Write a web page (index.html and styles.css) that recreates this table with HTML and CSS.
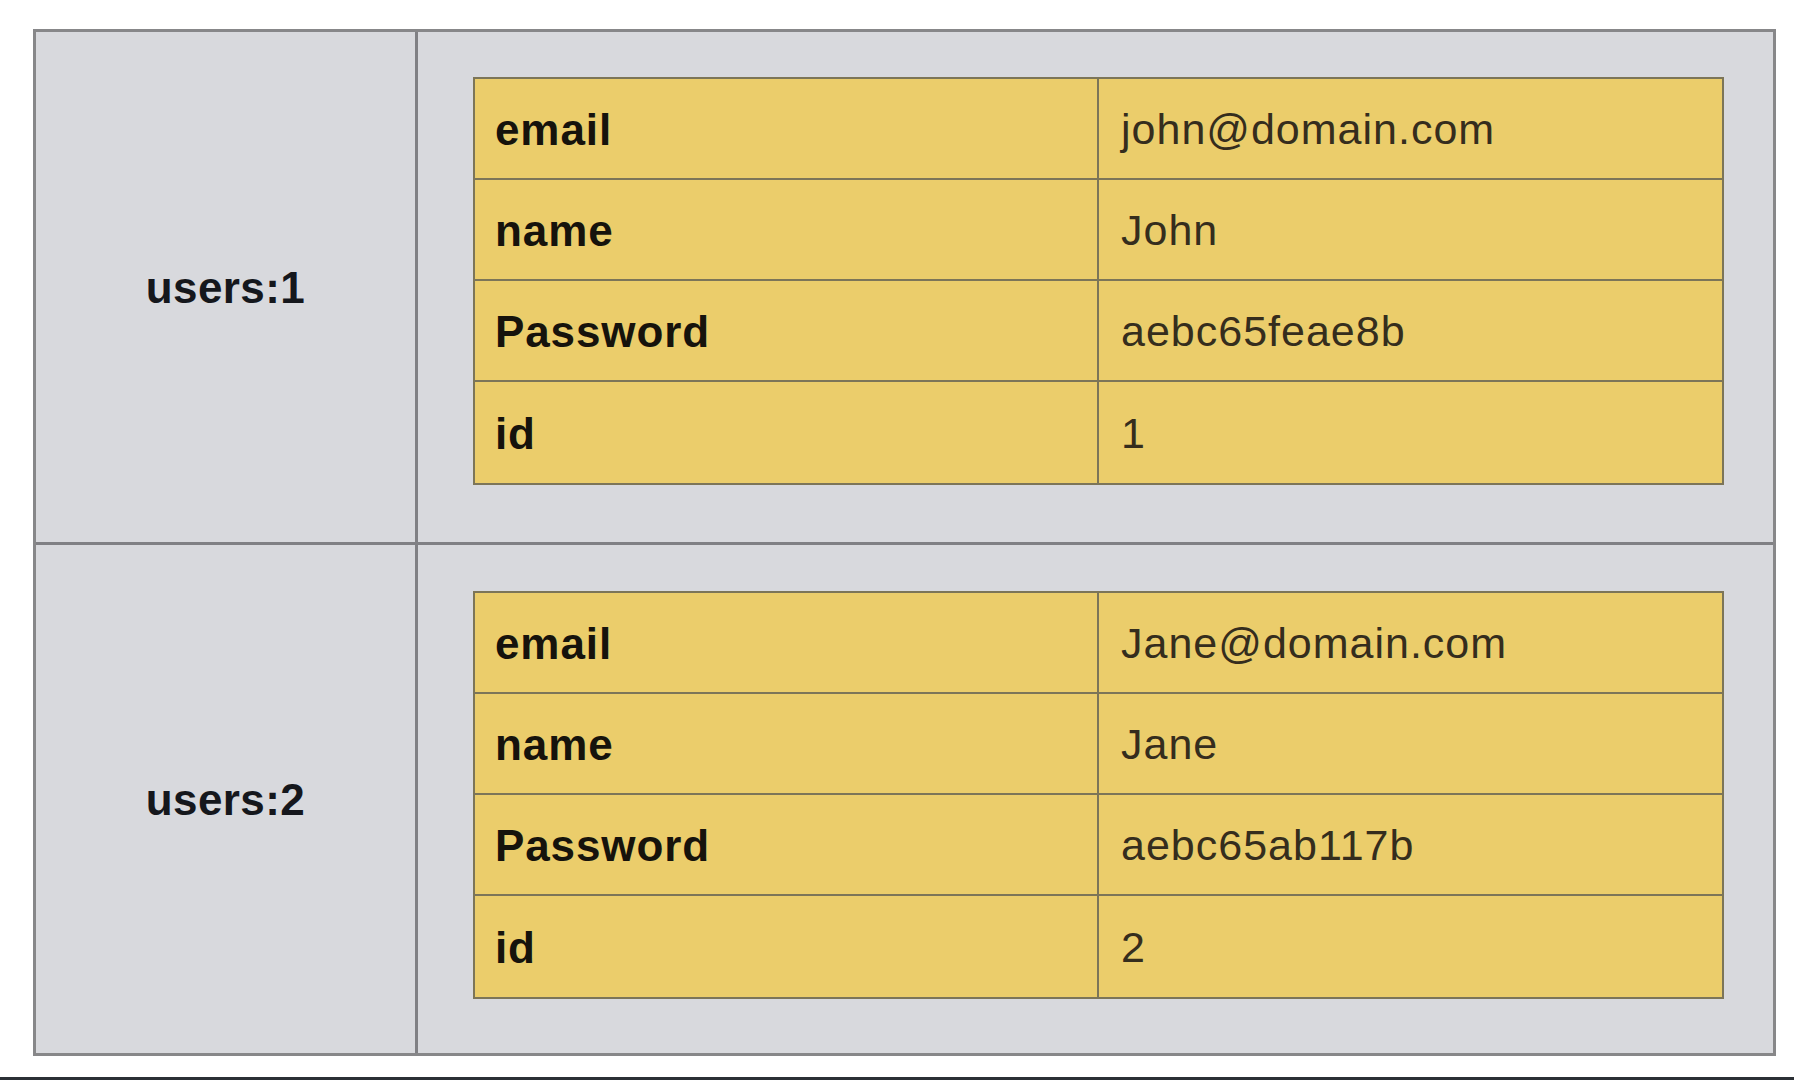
FILE: index.html
```html
<!DOCTYPE html>
<html lang="en">
<head>
<meta charset="utf-8">
<title>Redis hashes</title>
<link rel="stylesheet" href="styles.css">
</head>
<body>
<div class="page">
  <div class="board">
    <div class="key key-first">users:1</div>
    <div class="cell cell-first">
      <div class="hash">
        <div class="field">email</div><div class="value">john@domain.com</div>
        <div class="field">name</div><div class="value">John</div>
        <div class="field">Password</div><div class="value">aebc65feae8b</div>
        <div class="field last">id</div><div class="value last">1</div>
      </div>
    </div>
    <div class="key">users:2</div>
    <div class="cell">
      <div class="hash">
        <div class="field">email</div><div class="value">Jane@domain.com</div>
        <div class="field">name</div><div class="value">Jane</div>
        <div class="field">Password</div><div class="value">aebc65ab117b</div>
        <div class="field last">id</div><div class="value last">2</div>
      </div>
    </div>
  </div>
  <div class="bar"></div>
</div>
</body>
</html>
```

FILE: styles.css
```css
html, body {
  margin: 0;
  padding: 0;
  background: #ffffff;
}

.page {
  width: 1794px;
  height: 1080px;
  box-sizing: border-box;
  padding-top: 29px;
  display: flex;
  flex-direction: column;
  font-family: "Liberation Sans", Arial, sans-serif;
}

.board {
  margin-left: 33px;
  width: 1743px;
  height: 1027px;
  box-sizing: border-box;
  border: 3px solid #878789;
  background: #d8d9dd;
  display: grid;
  grid-template-columns: 382px 1fr;
  grid-template-rows: 513px 1fr;
}

.key {
  border-right: 3px solid #808084;
  display: flex;
  align-items: center;
  justify-content: center;
  font-weight: bold;
  font-size: 44px;
  letter-spacing: 0.4px;
  color: #15171c;
  padding-top: 2px;
}

.key-first,
.cell-first {
  border-bottom: 3px solid #808084;
}

.cell {
  padding: 46px 49px 0 55px;
}

.cell-first {
  padding-top: 45px;
}

.hash {
  width: 1251px;
  height: 408px;
  box-sizing: border-box;
  border: 2px solid #7c7558;
  background: #ebcd6b;
  display: grid;
  grid-template-columns: 624px 1fr;
  grid-template-rows: repeat(4, 1fr);
}

.field,
.value {
  display: flex;
  align-items: center;
  border-bottom: 2px solid #7c7558;
  padding-top: 2px;
}

.field {
  border-right: 2px solid #7c7558;
  padding-left: 20px;
  font-weight: bold;
  font-size: 44px;
  letter-spacing: 0.9px;
  color: #16130c;
}

.value {
  padding-left: 22px;
  font-size: 43px;
  letter-spacing: 1px;
  color: #352d1d;
}

.last {
  border-bottom: none;
}

.bar {
  margin-top: auto;
  height: 3px;
  background: #2b3035;
}
```
